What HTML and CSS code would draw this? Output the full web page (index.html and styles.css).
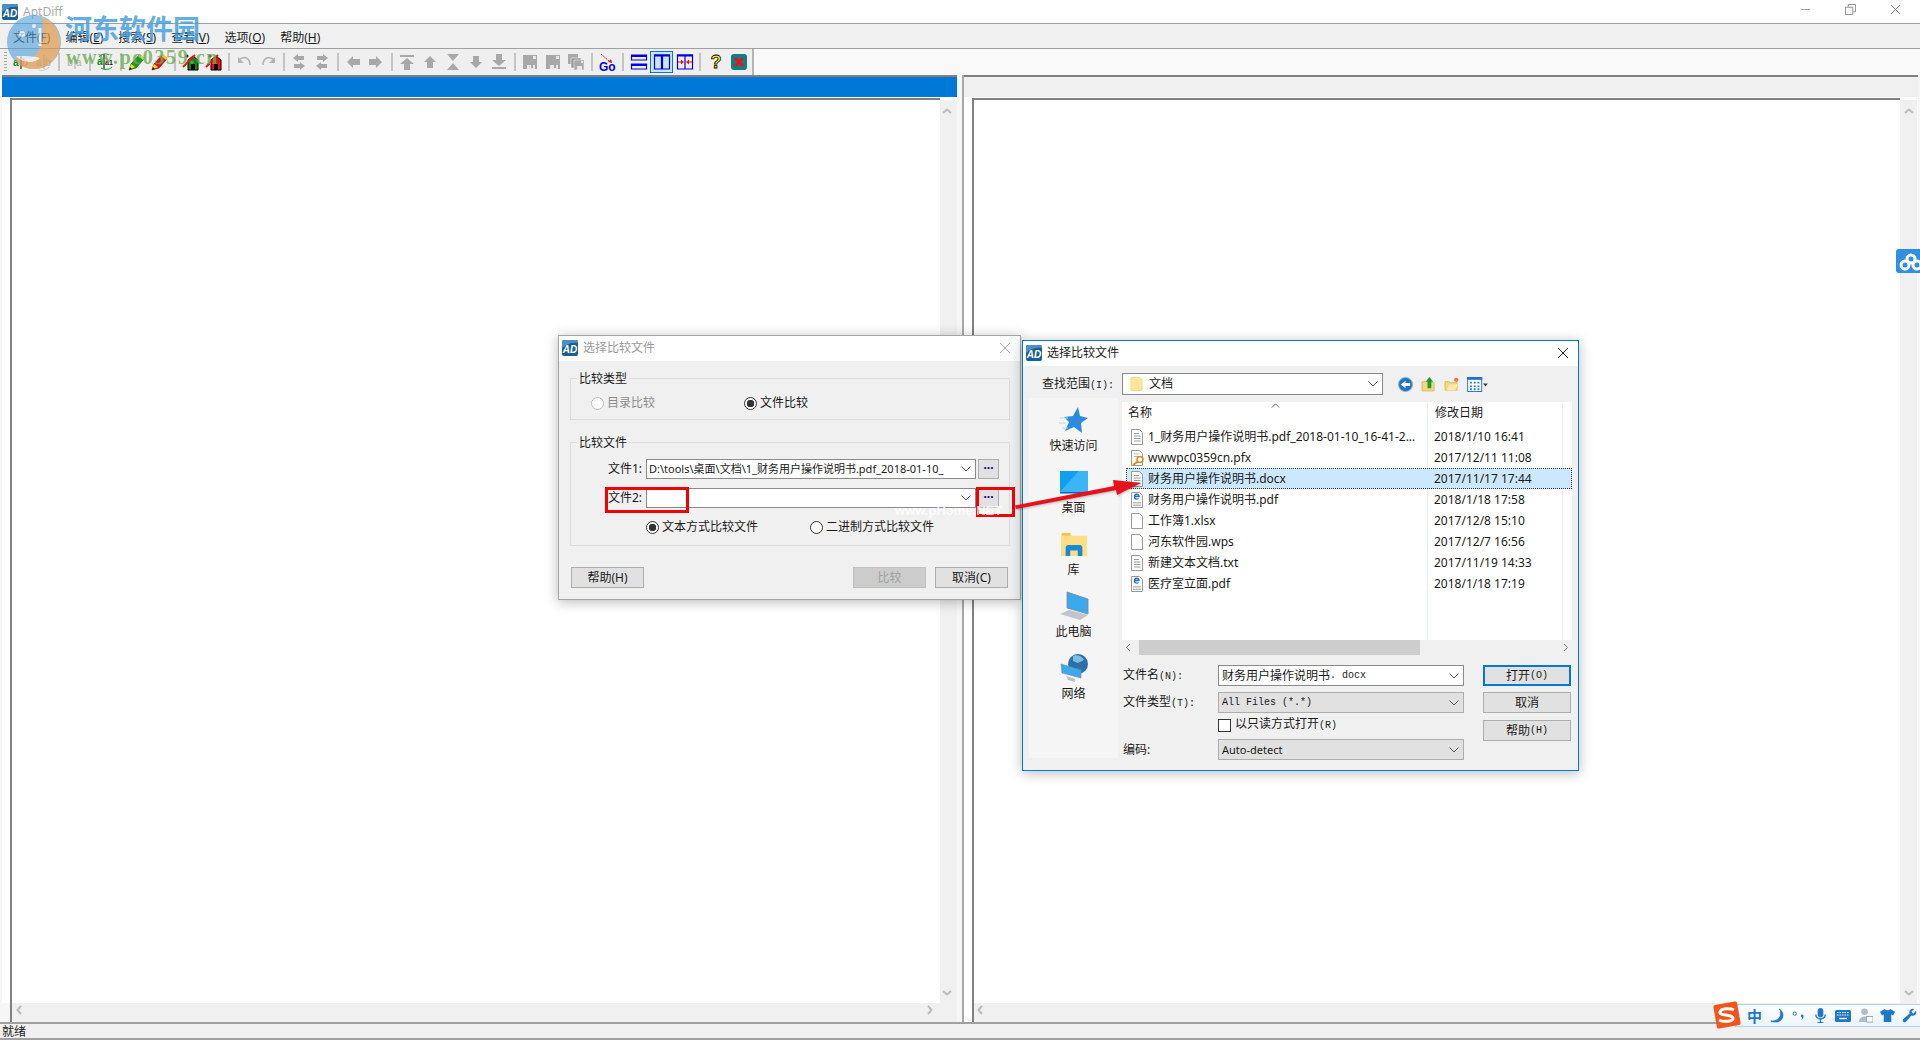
FILE: index.html
```html
<!DOCTYPE html>
<html lang="zh-CN">
<head>
<meta charset="utf-8">
<title>AptDiff</title>
<link rel="stylesheet" href="styles.css">
</head>
<body>
<svg class="defs" width="0" height="0" aria-hidden="true">
  <symbol id="ad" viewBox="0 0 16 16"><rect width="16" height="16" rx="2" fill="#1c5f96"/><path d="M0 8C5 3 11 2 16 3V2a2 2 0 0 0-2-2H2a2 2 0 0 0-2 2z" fill="#4c91c4"/><text x="8" y="12.5" text-anchor="middle" class="adt">AD</text></symbol>
  <symbol id="pen-g" viewBox="0 0 18 18"><path d="M1 17l2-6 8-9 5 4-8 9z" fill="#1f9a1f" stroke="#0b4d0b" stroke-width=".6"/><path d="M1 17l2-6 4 3z" fill="#ffe400"/><path d="M1 17l1-3 2 2z" fill="#000"/><path d="M10 3l5 4 2-2-5-4z" fill="#b6d96a"/></symbol>
  <symbol id="pen-r" viewBox="0 0 18 18"><path d="M1 17l2-6 8-9 5 4-8 9z" fill="#e0141c" stroke="#6d0b0b" stroke-width=".6"/><path d="M1 17l2-6 4 3z" fill="#ffe400"/><path d="M1 17l1-3 2 2z" fill="#000"/><path d="M10 3l5 4 2-2-5-4z" fill="#f0c040"/></symbol>
  <symbol id="house-g" viewBox="0 0 18 18"><path d="M6 7l5-4 5 4v10H6z" fill="#0a8a1a" stroke="#000"/><rect x="9" y="11" width="4" height="6" fill="#000"/><path d="M1 14L13 2" stroke="#f01010" stroke-width="2"/><circle cx="5" cy="3" r="1.6" fill="#222"/></symbol>
  <symbol id="house-r" viewBox="0 0 18 18"><path d="M6 7l5-4 5 4v10H6z" fill="#f01010" stroke="#000"/><rect x="9" y="11" width="4" height="6" fill="#000"/><path d="M1 14L13 2" stroke="#f01010" stroke-width="2"/><circle cx="5" cy="3" r="1.6" fill="#222"/></symbol>
  <symbol id="undo" viewBox="0 0 18 18"><path d="M4 6c5-3 10-1 10 6" fill="none" stroke="#b4b4b4" stroke-width="1.6"/><path d="M2 4v6h6z" fill="#b4b4b4"/></symbol>
  <symbol id="redo" viewBox="0 0 18 18"><path d="M14 6C9 3 4 5 4 12" fill="none" stroke="#b4b4b4" stroke-width="1.6"/><path d="M16 4v6h-6z" fill="#b4b4b4"/></symbol>
  <symbol id="lr-a" viewBox="0 0 18 18"><path d="M3 5l5-4v2h6v4H8v2zM15 13l-5-4v2H4v4h6v2z" fill="#a8a8a8"/></symbol>
  <symbol id="lr-b" viewBox="0 0 18 18"><path d="M15 5l-5-4v2H4v4h6v2zM3 13l5-4v2h6v4H8v2z" fill="#a8a8a8"/></symbol>
  <symbol id="left" viewBox="0 0 18 18"><path d="M3 9l6-6v3h7v6H9v3z" fill="#a8a8a8"/></symbol>
  <symbol id="right" viewBox="0 0 18 18"><path d="M15 9L9 3v3H2v6h7v3z" fill="#a8a8a8"/></symbol>
  <symbol id="top" viewBox="0 0 18 18"><path d="M2 2h14v2H2zM9 5l7 6h-4v6H6v-6H2z" fill="#a8a8a8"/></symbol>
  <symbol id="up" viewBox="0 0 18 18"><path d="M9 3l6 6h-3v6H6V9H3z" fill="#a8a8a8"/></symbol>
  <symbol id="mid" viewBox="0 0 18 18"><path d="M3 1h12l-6 7zM9 10l6 7H3z" fill="#a8a8a8"/></symbol>
  <symbol id="down" viewBox="0 0 18 18"><path d="M9 15l6-6h-3V3H6v6H3z" fill="#a8a8a8"/></symbol>
  <symbol id="bottom" viewBox="0 0 18 18"><path d="M2 14h14v2H2zM9 13l7-6h-4V1H6v6H2z" fill="#a8a8a8"/></symbol>
  <symbol id="save" viewBox="0 0 18 18"><path d="M2 2h14v14H2z" fill="#a8a8a8"/><path d="M12 3h3v3h-3zM6 12h8v4H6z" fill="#e8e8e8"/><path d="M10 12h2v3h-2z" fill="#a8a8a8"/></symbol>
  <symbol id="saves" viewBox="0 0 18 18"><path d="M1 1h10v10H1z" fill="#a8a8a8"/><path d="M4 5h10v10H4z" fill="#999" stroke="#eee" stroke-width=".6"/><path d="M7 7h10v10H7z" fill="#a8a8a8" stroke="#eee" stroke-width=".6"/><path d="M14 8h2v2h-2zM10 13h5v4h-5z" fill="#e8e8e8"/></symbol>
  <symbol id="sp-h" viewBox="0 0 18 18"><path d="M1.500 2h15v5h-15zM1.500 11h15v5h-15z" fill="none" stroke="#0000e0" stroke-width="1.200"/><path d="M1 2h16v2H1zM1 11h16v2H1z" fill="#0000e0"/></symbol>
  <symbol id="sp-v" viewBox="0 0 18 18"><path d="M1.500 2h7v14h-7zM9.500 2h7v14h-7z" fill="none" stroke="#0000e0" stroke-width="1.200"/><path d="M1 1.500h16v2H1z" fill="#0000e0"/></symbol>
  <symbol id="sp-c" viewBox="0 0 18 18"><path d="M1.500 2h15v14h-15zM9 2v14" fill="none" stroke="#0000e0" stroke-width="1.200"/><path d="M1 1.500h16v2H1z" fill="#0000e0"/><path d="M2 9h5M16 9h-5" stroke="#f01010" stroke-width="1.200"/><path d="M8 9L5 6.500v5zM10 9l3-2.500v5z" fill="#f01010"/></symbol>
  <symbol id="stop" viewBox="0 0 18 18"><rect x="1" y="1" width="16" height="16" rx="3" fill="#0f7f86"/><path d="M4 6l2-2 3 3 3-3 2 2-3 3 3 3-2 2-3-3-3 3-2-2 3-3z" fill="#f01010"/></symbol>
  <symbol id="chev" viewBox="0 0 10 6"><path d="M.5 .5L5 5 9.500 .5" fill="none" stroke="#555" stroke-width="1"/></symbol>
  <symbol id="chev-g" viewBox="0 0 10 6"><path d="M1 1l4 3.500L9 1" fill="none" stroke="#bbb" stroke-width="2"/></symbol>
  <symbol id="doc" viewBox="0 0 16 16"><path d="M2.500 .5h8l3 3v12h-11z" fill="#fff" stroke="#9a9a9a"/><path d="M5 4.500h5M5 7h6.500M5 9.500h6.500M5 12h6.500" stroke="#9a9a9a"/></symbol>
  <symbol id="blank" viewBox="0 0 16 16"><path d="M2.500 .5h8l3 3v12h-11z" fill="#fff" stroke="#9a9a9a"/></symbol>
  <symbol id="pdf" viewBox="0 0 16 16"><path d="M2.500 .5h8l3 3v12h-11z" fill="#fff" stroke="#9a9a9a"/><path d="M5.500 4.500h4.500c0-3-4.500-3-4.500 0s2.500 3 4 2" fill="none" stroke="#1a6fc9" stroke-width="1.300"/><path d="M4 10.500h8M4 12h8M4 13.500h8" stroke="#aaa" stroke-width=".8"/></symbol>
  <symbol id="pfx" viewBox="0 0 16 16"><path d="M2.500 .5h8l3 3v12h-11z" fill="#fff" stroke="#9a9a9a"/><path d="M5 4h5M5 6.500h6" stroke="#b5b5b5"/><circle cx="11" cy="9.500" r="3" fill="none" stroke="#d68a1a" stroke-width="1.500"/><path d="M9 11.500L4 15" stroke="#d68a1a" stroke-width="1.800"/></symbol>
</svg>

<div class="app">
  <header class="title"><svg class="title-ico"><use href="#ad"/></svg><span class="title-txt">AptDiff</span>
    <div class="winbtns">
      <svg class="wb" viewBox="0 0 12 12"><path d="M1 6h10" stroke="#999"/></svg>
      <svg class="wb" viewBox="0 0 12 12"><path d="M.5 3.500h8v8h-8zM3.500 3V.5h8v8H9" fill="none" stroke="#888"/></svg>
      <svg class="wb" viewBox="0 0 12 12"><path d="M1 1l10 10M11 1L1 11" stroke="#777"/></svg>
    </div>
  </header>
  <nav class="menu">
    <span>文件(<u>F</u>)</span><span>编辑(<u>E</u>)</span><span>搜索(<u>S</u>)</span><span>查看(<u>V</u>)</span><span>选项(<u>O</u>)</span><span>帮助(<u>H</u>)</span>
  </nav>
  <div class="toolbar-row">
    <div class="toolbar">
      <i class="grip"></i>
      <span class="tb"><svg class="ti" viewBox="0 0 18 18"><text x="1" y="13" class="tt tg">a</text><path d="M9 3v13" stroke="#000"/><text x="10" y="13" class="tt tp">b</text></svg></span>
      <span class="tb"><svg class="ti" viewBox="0 0 18 18"><text x="1" y="13" class="tt tf">a</text><path d="M9 2v14" stroke="#aaa"/><text x="10" y="13" class="tt tf">b</text><path d="M4 17c4 1 8 0 10-3" fill="none" stroke="#ccc"/></svg></span>
      <i class="sep"></i>
      <span class="tb"><svg class="ti" viewBox="0 0 18 18"><text x="1" y="13" class="tt tf">b</text><path d="M9 3v13" stroke="#aaa"/><text x="10" y="13" class="tt tf">a</text></svg></span>
      <i class="sep"></i>
      <span class="tb"><svg class="ti" viewBox="0 0 18 18"><text x="0" y="12" class="tt tg">a</text><path d="M7 1v15" stroke="#000"/><text x="8" y="12" class="tt tk">a1</text><path d="M2 4c2-3 7-4 10-2M15 14c-3 3-8 3-11 1" fill="none" stroke="#0a9a2a"/></svg></span>
      <i class="sep"></i>
      <span class="tb"><svg class="ti"><use href="#pen-g"/></svg></span>
      <span class="tb"><svg class="ti"><use href="#pen-r"/></svg></span>
      <i class="sep"></i>
      <span class="tb"><svg class="ti"><use href="#house-g"/></svg></span>
      <span class="tb"><svg class="ti"><use href="#house-r"/></svg></span>
      <i class="sep"></i>
      <span class="tb"><svg class="ti"><use href="#undo"/></svg></span>
      <span class="tb"><svg class="ti"><use href="#redo"/></svg></span>
      <i class="sep"></i>
      <span class="tb"><svg class="ti"><use href="#lr-a"/></svg></span>
      <span class="tb"><svg class="ti"><use href="#lr-b"/></svg></span>
      <i class="sep"></i>
      <span class="tb"><svg class="ti"><use href="#left"/></svg></span>
      <span class="tb"><svg class="ti"><use href="#right"/></svg></span>
      <i class="sep"></i>
      <span class="tb"><svg class="ti"><use href="#top"/></svg></span>
      <span class="tb"><svg class="ti"><use href="#up"/></svg></span>
      <span class="tb"><svg class="ti"><use href="#mid"/></svg></span>
      <span class="tb"><svg class="ti"><use href="#down"/></svg></span>
      <span class="tb"><svg class="ti"><use href="#bottom"/></svg></span>
      <i class="sep"></i>
      <span class="tb"><svg class="ti"><use href="#save"/></svg></span>
      <span class="tb"><svg class="ti"><use href="#save"/></svg></span>
      <span class="tb"><svg class="ti"><use href="#saves"/></svg></span>
      <i class="sep"></i>
      <span class="tb"><svg class="ti" viewBox="0 0 18 18"><path d="M3 1l9 8" stroke="#f01010" stroke-dasharray="2 1"/><path d="M14 10l-4-1 3-3z" fill="#f01010"/><text x="1" y="17.500" class="tgo">Go</text></svg></span>
      <i class="sep"></i>
      <span class="tb"><svg class="ti"><use href="#sp-h"/></svg></span>
      <span class="tb on"><svg class="ti"><use href="#sp-v"/></svg></span>
      <span class="tb"><svg class="ti"><use href="#sp-c"/></svg></span>
      <i class="sep"></i>
      <span class="tb"><svg class="ti" viewBox="0 0 18 18"><text x="9" y="15" text-anchor="middle" class="tq">?</text></svg></span>
      <span class="tb"><svg class="ti"><use href="#stop"/></svg></span>
    </div>
  </div>
  <main class="panes">
    <section class="pane pane-l">
      <div class="phead blue"></div>
      <div class="pbody">
        <div class="sheet"></div>
        <div class="vsb"><svg class="ar flip"><use href="#chev-g"/></svg><svg class="ar"><use href="#chev-g"/></svg></div>
      </div>
      <div class="hsb"><svg class="ar rl"><use href="#chev-g"/></svg><svg class="ar rr"><use href="#chev-g"/></svg></div>
    </section>
    <section class="pane pane-r">
      <div class="phead"></div>
      <div class="pbody">
        <div class="sheet"></div>
        <div class="vsb"><svg class="ar flip"><use href="#chev-g"/></svg><svg class="ar"><use href="#chev-g"/></svg></div>
      </div>
      <div class="hsb"><svg class="ar rl"><use href="#chev-g"/></svg><svg class="ar rr"><use href="#chev-g"/></svg></div>
    </section>
  </main>
  <footer class="status">就绪</footer>
</div>

<section class="dlg dlg-a">
  <div class="dlg-title"><svg class="dlg-ico"><use href="#ad"/></svg><span class="dim">选择比较文件</span><svg class="dlg-x" viewBox="0 0 10 10"><path d="M0 0l10 10M10 0L0 10" stroke="#aaa"/></svg></div>
  <div class="dlg-a-body">
    <div class="grp grp1">
      <span class="legend">比较类型</span>
      <div class="radios r1">
        <label class="rad dis"><i class="radio"></i>目录比较</label>
        <label class="rad"><i class="radio chk"></i>文件比较</label>
      </div>
    </div>
    <div class="grp grp2">
      <span class="legend">比较文件</span>
      <div class="frow"><span class="flab">文件1:</span><div class="inp">D:\tools\桌面\文档\1_财务用户操作说明书.pdf_2018-01-10_<svg class="cv"><use href="#chev"/></svg></div><span class="dots">···</span></div>
      <div class="frow"><span class="flab">文件2:</span><div class="inp"><svg class="cv"><use href="#chev"/></svg></div><span class="dots">···</span></div>
      <div class="radios r2">
        <label class="rad"><i class="radio chk"></i>文本方式比较文件</label>
        <label class="rad"><i class="radio"></i>二进制方式比较文件</label>
      </div>
    </div>
    <div class="dlg-a-btns">
      <span class="btn">帮助(H)</span><span class="spacer"></span><span class="btn off">比较</span><span class="btn">取消(C)</span>
    </div>
  </div>
</section>

<section class="dlg dlg-b">
  <div class="dlg-title"><svg class="dlg-ico"><use href="#ad"/></svg><span>选择比较文件</span><svg class="dlg-x dk" viewBox="0 0 10 10"><path d="M0 0l10 10M10 0L0 10" stroke="#222"/></svg></div>
  <div class="lookin">
    <span class="lk-lab">查找范围<span class="m">(I):</span></span>
    <div class="lk-combo"><svg class="fold" viewBox="0 0 14 16"><path d="M1 1h9l3 2v12H1z" fill="#ffe79a" stroke="#e6c766" stroke-width=".6"/></svg>文档<svg class="cv"><use href="#chev"/></svg></div>
    <div class="lk-tools">
      <svg class="lt" viewBox="0 0 16 16"><circle cx="8" cy="8" r="7.500" fill="#1e74c8"/><circle cx="8" cy="8" r="7.500" fill="none" stroke="#8fb4d6"/><path d="M3 8l5-4v2.500h5v3H8V12z" fill="#fff"/></svg>
      <svg class="lt" viewBox="0 0 16 16"><path d="M1 5h5l1 1h7v9H1z" fill="#f3d77a" stroke="#caa94a" stroke-width=".6"/><path d="M9 0l4 5h-2v7H7V5H5z" fill="#1c9a2a"/></svg>
      <svg class="lt" viewBox="0 0 16 16"><path d="M1 5h5l1 1h7v8H1z" fill="#f3d77a" stroke="#caa94a" stroke-width=".6"/><path d="M3 14l2-6h10l-3 6z" fill="#fbe9a6"/><circle cx="13" cy="3" r="2.300" fill="#f0782a"/></svg>
      <svg class="lt lv" viewBox="0 0 22 16"><rect x=".5" y=".5" width="15" height="15" fill="#fff" stroke="#1e74c8"/><path d="M0 0h16v3H0z" fill="#1e74c8"/><path d="M3 5h2v2H3zM7 5h2v2H7zM11 5h2v2h-2zM3 9h2v2H3zM7 9h2v2H7zM11 9h2v2h-2zM3 12h2v2H3zM7 12h2v2H7zM11 12h2v2h-2z" fill="#2a7fc9"/><path d="M17 7h5l-2.500 3z" fill="#333"/></svg>
    </div>
  </div>
  <div class="mid">
    <aside class="side">
      <div class="sitem"><svg class="si" viewBox="0 0 30 30"><path d="M19 2l2 9 8 2-7 5 1 10-8-6-9 4 4-9-5-5 9-1z" fill="#2c8be0"/><path d="M1 13h8M0 18h7M3 23h6" stroke="#bcd9f2"/></svg><span>快速访问</span></div>
      <div class="sitem"><svg class="si" viewBox="0 0 30 24"><rect x="1" y="1" width="28" height="21" fill="#10a0f0"/><path d="M1 22L20 1h9v21z" fill="#3cb4f8"/><path d="M1 22h28v1.500H1z" fill="#0a66b8"/></svg><span>桌面</span></div>
      <div class="sitem"><svg class="si" viewBox="0 0 30 28"><path d="M1 3h10l2 2h16v22H1z" fill="#ffdf85"/><path d="M2 2h9v3H2z" fill="#f4c24f"/><path d="M6 27v-9c0-2 1-3 3-3h12c2 0 3 1 3 3v9h-5v-6h-8v6z" fill="#1e88d8"/></svg><span>库</span></div>
      <div class="sitem"><svg class="si" viewBox="0 0 30 30"><path d="M8 1l21 7v15L8 17z" fill="#3ca9ec" stroke="#7a8a98" stroke-width=".8"/><path d="M1 23l9-4 19 5-8 5z" fill="#bfc5cb"/></svg><span>此电脑</span></div>
      <div class="sitem"><svg class="si" viewBox="0 0 30 30"><circle cx="19" cy="11" r="10" fill="#2d6fa8"/><path d="M14 3c4-2 9 0 11 4l-6 3-5-2z" fill="#7cc0e0"/><path d="M2 11l20 6v8L3 20z" fill="#3ca9ec" stroke="#6d8da8" stroke-width=".6"/><path d="M7 23l9 3v3l-7-2z" fill="#b8bec4"/></svg><span>网络</span></div>
    </aside>
    <div class="listwrap">
      <div class="list">
        <div class="lrow lhead"><span class="c1">名称</span><span class="c2">修改日期</span><span class="c3">类型</span><svg class="sort flip"><use href="#chev"/></svg></div>
        <div class="lrow"><svg class="fi"><use href="#doc"/></svg><span class="c1">1_财务用户操作说明书.pdf_2018-01-10_16-41-2...</span><span class="c2">2018/1/10 16:41</span><span class="c3">Chrome</span></div>
        <div class="lrow"><svg class="fi"><use href="#pfx"/></svg><span class="c1">wwwpc0359cn.pfx</span><span class="c2">2017/12/11 11:08</span><span class="c3">Per</span></div>
        <div class="lrow sel"><svg class="fi"><use href="#doc"/></svg><span class="c1">财务用户操作说明书.docx</span><span class="c2">2017/11/17 17:44</span><span class="c3">Chrome</span></div>
        <div class="lrow"><svg class="fi"><use href="#pdf"/></svg><span class="c1">财务用户操作说明书.pdf</span><span class="c2">2018/1/18 17:58</span><span class="c3">PDF</span></div>
        <div class="lrow"><svg class="fi"><use href="#blank"/></svg><span class="c1">工作簿1.xlsx</span><span class="c2">2017/12/8 15:10</span><span class="c3">XLS</span></div>
        <div class="lrow"><svg class="fi"><use href="#blank"/></svg><span class="c1">河东软件园.wps</span><span class="c2">2017/12/7 16:56</span><span class="c3">WPS</span></div>
        <div class="lrow"><svg class="fi"><use href="#doc"/></svg><span class="c1">新建文本文档.txt</span><span class="c2">2017/11/19 14:33</span><span class="c3">文本</span></div>
        <div class="lrow"><svg class="fi"><use href="#pdf"/></svg><span class="c1">医疗室立面.pdf</span><span class="c2">2018/1/18 17:19</span><span class="c3">PDF</span></div>
      </div>
      <div class="lsb"><svg class="lar rl"><use href="#chev"/></svg><i class="thumb"></i><svg class="lar rr"><use href="#chev"/></svg></div>
      <div class="form">
        <div class="fcol">
          <div class="fr"><span class="fl">文件名<span class="m">(N):</span></span><div class="cb wh">财务用户操作说明书<span class="m">. docx</span><svg class="cv"><use href="#chev"/></svg></div></div>
          <div class="fr"><span class="fl">文件类型<span class="m">(T):</span></span><div class="cb"><span class="m">All Files (*.*)</span><svg class="cv"><use href="#chev"/></svg></div></div>
          <div class="fr ck"><span class="fl"></span><i class="check"></i><span>以只读方式打开<span class="m">(R)</span></span></div>
          <div class="fr"><span class="fl">编码:</span><div class="cb">Auto-detect<svg class="cv"><use href="#chev"/></svg></div></div>
        </div>
        <div class="bcol">
          <span class="btn def">打开<span class="m">(O)</span></span>
          <span class="btn">取消</span>
          <span class="btn">帮助<span class="m">(H)</span></span>
        </div>
      </div>
    </div>
  </div>
</section>

<div class="redbox rb1"></div>
<div class="redbox rb2"></div>
<span class="wm-net">www.pHome.NET</span>
<svg class="arrow" viewBox="0 0 140 40"><path d="M0 31.500L99 12 98 6 126 9 102 21 101 16 1 35z" fill="#e8101a"/></svg>

<div class="wm" aria-hidden="true">
  <svg class="wm-logo" viewBox="0 0 56 60"><circle cx="28" cy="30" r="27" fill="#4b9ed8" opacity=".8"/><path d="M36 5a27 27 0 0 1-4 52C14 58 8 50 10 44c8 8 32 6 26-39z" fill="#f29a3c" opacity=".85"/><path d="M10 44c6 7 18 8 24 2-6-2-18-2-24-2z" fill="#fff" opacity=".8"/><circle cx="16" cy="22" r="3" fill="#fff" opacity=".8"/><circle cx="28" cy="14" r="2" fill="#fff" opacity=".8"/><path d="M34 16v18" stroke="#fff" stroke-width="3" opacity=".8"/></svg>
  <span class="wm-cn">河东软件园</span>
  <span class="wm-url">www.pc0359.cn</span>
</div>

<a class="cloud" aria-label="cloud"><svg viewBox="0 0 24 18"><g fill="none" stroke="#fff" stroke-width="3"><circle cx="12" cy="6" r="4"/><circle cx="6" cy="12" r="4"/><circle cx="18" cy="12" r="4"/></g></svg></a>

<div class="ime">
  <svg class="ime-s" viewBox="0 0 28 28"><rect x="2" y="2" width="24" height="24" rx="2" fill="#f2541b" transform="rotate(-10 14 14)"/><path d="M21 9c-4-2-13-2-14 2s12 2 13 6-10 4-14 2" fill="none" stroke="#fff" stroke-width="3"/></svg>
  <div class="ime-bar">
    <span class="ime-zh">中</span>
    <svg class="ii" viewBox="0 0 16 16"><path d="M11 1c3 3 3 13-9 13 4 1 9 2 12-3 2-4 0-8-3-10z" fill="#1e78c8" stroke="#1e78c8"/></svg>
    <svg class="ii" viewBox="0 0 16 16"><circle cx="4" cy="6" r="1.800" fill="none" stroke="#1e78c8"/><path d="M12 7c2 0 2 4-1 6 1-2 1-3 0-3.500C10 8 11 7 12 7z" fill="#1e78c8"/></svg>
    <svg class="ii" viewBox="0 0 16 16"><rect x="5" y="0" width="6" height="10" rx="3" fill="#1e78c8"/><path d="M3 7c0 6 10 6 10 0M8 12v3M5 15.500h6" fill="none" stroke="#1e78c8" stroke-width="1.400"/></svg>
    <svg class="ii wd" viewBox="0 0 16 12"><rect width="16" height="12" rx="1.500" fill="#1e78c8"/><path d="M2 2.500h12M2 5h12" stroke="#fff" stroke-dasharray="1.500 1"/><path d="M4 8.500h8" stroke="#fff" stroke-width="1.400"/></svg>
    <svg class="ii" viewBox="0 0 16 16"><circle cx="7" cy="4" r="3.500" fill="#b0bcc8"/><path d="M1 15c0-8 12-8 12 0z" fill="#b0bcc8"/><rect x="9" y="9" width="7" height="6" fill="#fff" stroke="#9aa8b4"/></svg>
    <svg class="ii" viewBox="0 0 16 16"><path d="M5 1L0 4l2 4 2-1v8h8V7l2 1 2-4-5-3c-1 2-5 2-6 0z" fill="#1e78c8"/></svg>
    <svg class="ii" viewBox="0 0 16 16"><path d="M15 3l-3 3-2-2 3-3c-3-1-6 1-5 5L1 12c-1 2 1 4 3 3l6-7c4 1 6-2 5-5z" fill="#1e78c8"/></svg>
  </div>
</div>
</body>
</html>
```

FILE: styles.css
```css
* { box-sizing: border-box; }
html, body { margin: 0; padding: 0; }
body {
  width: 1920px; height: 1040px; overflow: hidden; position: relative;
  background: #f0f0f0; color: #1a1a1a;
  font: 12px/16px "Noto Sans", "Noto Sans CJK SC", sans-serif;
}
svg { display: block; }
.defs { position: absolute; }
.m { font-family: "Liberation Mono", "Noto Sans CJK SC", monospace; font-size: 10px; }
.adt { font: italic bold 10px "Liberation Sans", sans-serif; fill: #fff; }

.app { display: flex; flex-direction: column; height: 1040px; }
.title { height: 24px; background: #fff; border-bottom: 1px solid #a0a0a0; display: flex; align-items: center; padding-left: 2px; flex: none; }
.title-ico { width: 16px; height: 16px; margin-right: 5px; }
.title-txt { color: #aaa; font-size: 12px; }
.winbtns { margin-left: auto; display: flex; gap: 34px; padding-right: 19px; margin-top: -4px; }
.wb { width: 11px; height: 11px; }
.menu { height: 25px; flex: none; display: flex; border-bottom: 1px solid #a0a0a0; padding: 6px 0 0 13px; gap: 15px; background: #f0f0f0; }
.toolbar-row { height: 26px; flex: none; background: #f9f9f9; }
.toolbar { width: 754px; height: 26px; background: #efefef; border-right: 2px solid #b4b4b4; display: flex; align-items: center; padding-left: 9px; position: relative; }
.grip { position: absolute; left: 4px; top: 3px; width: 3px; height: 21px; background: repeating-linear-gradient(#aaa 0 1px, transparent 1px 3px); }
.tb { width: 23px; height: 22px; flex: none; display: flex; align-items: center; justify-content: center; }
.tb.on { background: #cce4f7; border: 1px solid #0078d7; }
.sep { width: 8.1px; height: 18px; flex: none; background: linear-gradient(#c4c4c4, #c4c4c4) center / 2px 100% no-repeat; }
.ti { width: 18px; height: 18px; overflow: visible; }
.tt { font: bold 10px "Liberation Sans", sans-serif; }
.tg { fill: #0a8a1a; } .tp { fill: #f08a96; } .tf { fill: #c0c0c0; } .tk { fill: #222; font-size: 7px; }
.tgo { font: bold 12px "Liberation Sans", sans-serif; fill: #0000d8; }
.tq { font: bold 18px "Liberation Sans", sans-serif; fill: #ffef20; stroke: #000; stroke-width: .8; }

.panes { flex: 1; display: flex; min-height: 0; background: #f6f6f6; }
.pane { display: flex; flex-direction: column; }
.pane-l { width: 957px; }
.pane-r { width: 956px; margin-left: 5px; border-left: 2px solid #a8a8a8; background: #fff; }
.phead { height: 23px; flex: none; background: #f0f0f0; border-top: 2px solid #808080; border-bottom: 1px solid #fff; }
.phead.blue { background: #0078d7; }
.pane-l .phead { margin-left: 2px; }
.pbody { flex: 1; display: flex; min-height: 0; background: #fff; padding-left: 8px; }
.pane-l .pbody { margin-left: 2px; }
.pane-r .pbody { padding-right: 1px; }
.sheet { flex: 1; background: #fff; border-left: 2px solid #808080; border-top: 2px solid #808080; }
.vsb { width: 17px; flex: none; background: #f0f0f0; display: flex; flex-direction: column; justify-content: space-between; align-items: center; padding: 8px 0 7px; border-top: 2px solid #fff; }
.pane-l .vsb { padding-right: 3px; }
.ar { width: 10px; height: 6px; }
.flip { transform: scaleY(-1); }
.hsb { height: 19px; flex: none; background: #f0f0f0; margin-left: 8px; display: flex; justify-content: space-between; align-items: flex-start; padding: 4px 22px 0 2px; border-left: 2px solid #808080; }
.pane-l .hsb { margin-left: 10px; }
.pane-r .hsb { padding-right: 18px; padding-left: 1px; }
.rl { transform: rotate(90deg); }
.rr { transform: rotate(-90deg); }
.status { height: 18px; flex: none; border-top: 2px solid #a0a0a0; border-bottom: 2px solid #a0a0a0; padding-left: 2px; line-height: 15px; background: #f0f0f0; }

.dlg { position: absolute; background: #f0f0f0; box-shadow: 0 2px 12px rgba(0,0,0,.28); display: flex; flex-direction: column; }
.dlg-a { left: 558px; top: 335px; width: 463px; height: 265px; border: 1px solid #a5a5a5; }
.dlg-b { left: 1022px; top: 340px; width: 557px; height: 431px; border: 1px solid #0078d7; }
.dlg-title { height: 25px; flex: none; background: #fff; display: flex; align-items: center; padding: 0 0 2px 3px; gap: 5px; }
.dlg-ico { width: 16px; height: 16px; flex: none; }
.dim { color: #999; }
.dlg-x { width: 10px; height: 10px; margin-left: auto; margin-right: 10px; }

.dlg-a-body { padding: 17px 10px 0 11px; display: flex; flex-direction: column; flex: 1; }
.grp { border: 1px solid #dcdcdc; position: relative; flex: none; }
.legend { position: absolute; left: 6px; top: -8px; padding: 0 2px; background: #f0f0f0; line-height: 16px; }
.grp1 { height: 42px; }
.grp2 { height: 104px; margin-top: 22px; }
.radios { display: flex; white-space: nowrap; }
.rad { display: flex; align-items: center; gap: 3px; height: 16px; }
.radio { width: 13px; height: 13px; border: 1px solid #333; border-radius: 50%; background: #fff; flex: none; }
.radio.chk { background: radial-gradient(circle, #333 0 3.500px, #fff 4px); }
.dis { color: #8c8c8c; } .dis .radio { border-color: #bbb; }
.r1 { padding: 16px 0 0 20px; }
.r1 .rad:first-child { width: 153px; }
.r2 { padding: 11px 0 0 75px; }
.r2 .rad:first-child { width: 164px; }
.frow { display: flex; align-items: center; height: 20px; margin-top: 9px; padding-left: 37px; }
.legend + .frow { margin-top: 16px; }
.flab { width: 38px; flex: none; }
.inp { width: 330px; height: 20px; background: #fff; border: 1px solid #8a8a8a; padding-left: 2px; display: flex; align-items: center; position: relative; font-size: 11px; white-space: nowrap; overflow: hidden; }
.cv { width: 10px; height: 6px; position: absolute; right: 4px; top: 50%; margin-top: -3px; }
.dots { width: 21px; height: 20px; margin-left: 2px; background: #e1e1e1; border: 1px solid #adadad; color: #000080; font-weight: bold; text-align: center; line-height: 16px; }
.dlg-a-btns { display: flex; margin-top: 21px; gap: 9px; padding-left: 1px; }
.spacer { flex: 1; }
.btn { width: 73px; height: 21px; background: #e1e1e1; border: 1px solid #adadad; display: flex; justify-content: center; align-items: center; }
.btn.off { background: #ccc; border-color: #bfbfbf; color: #a0a0a0; }
.dlg-a-btns .btn:last-child { margin-right: 2px; }

.lookin { height: 31px; flex: none; display: flex; align-items: center; padding: 5px 0 0 19px; }
.lk-lab { width: 80px; flex: none; padding-top: 1px; }
.lk-combo { width: 261px; height: 22px; background: #fff; border: 1px solid #8a8a8a; display: flex; align-items: center; padding-left: 7px; gap: 6px; position: relative; }
.fold { width: 13px; height: 16px; }
.lk-tools { display: flex; align-items: center; gap: 8px; margin-left: 15px; }
.lt { width: 15px; height: 15px; }
.lv { width: 21px; height: 15px; }
.mid { flex: 1; display: flex; padding: 0 6px 0 6px; min-height: 0; }
.side { width: 89px; height: 360px; flex: none; margin-top: 1px; background: #f5f5f5; padding-top: 2px; display: flex; flex-direction: column; align-items: center; }
.sitem { height: 62px; flex: none; display: flex; flex-direction: column; align-items: center; width: 100%; padding-top: 2px; }
.si { width: 30px; height: 30px; margin: 3px 0 3px; }
.sitem:nth-child(2) .si, .sitem:nth-child(3) .si { height: 26px; margin: 5px 0; }
.listwrap { margin-left: 4px; width: 450px; flex: none; display: flex; flex-direction: column; padding-top: 5px; }
.list { height: 238px; flex: none; background-color: #fff; background-image: linear-gradient(#e8eef6, #e8eef6), linear-gradient(#e8eef6, #e8eef6); background-size: 1px 100%; background-position: 305px 0, 440px 0; background-repeat: no-repeat; overflow: hidden; }
.lrow { height: 21px; display: flex; align-items: center; position: relative; padding-left: 5px; white-space: nowrap; }
.lhead { height: 24px; padding-left: 6px; padding-bottom: 2px; }
.lhead .c1 { margin-left: 0; width: 306px; }
.fi { width: 16px; height: 16px; position: absolute; left: 7px; top: 3px; }
.c1 { margin-left: 21px; width: 285px; flex: none; overflow: hidden; }
.c2 { width: 141px; flex: none; padding-left: 1px; }
.c3 { width: 3px; flex: none; overflow: hidden; }
.sel { background: #cce8ff; outline: 1px dotted #333; outline-offset: -1px; margin-left: 4px; padding-left: 1px; }
.sel .fi { left: 3px; }
.sort { width: 9px; height: 5px; position: absolute; left: 149px; top: 1px; }
.lsb { height: 15px; flex: none; background: #f0f0f0; display: flex; align-items: center; justify-content: space-between; padding: 0 2px; position: relative; }
.thumb { position: absolute; left: 17px; top: 0; width: 281px; height: 15px; background: #cdcdcd; }
.lar { width: 8px; height: 5px; }
.form { display: flex; padding-top: 10px; }
.fcol { width: 343px; flex: none; display: flex; flex-direction: column; margin-left: 1px; }
.fr { display: flex; align-items: center; height: 21px; margin-bottom: 6px; }
.fr.ck { margin-bottom: 7px; height: 14px; margin-top: -1px; }
.fl { width: 95px; flex: none; }
.cb { width: 246px; height: 21px; background: #e1e1e1; border: 1px solid #adadad; padding-left: 3px; display: flex; align-items: center; position: relative; font-size: 11px; }
.cb.wh { background: #fff; border-color: #8a8a8a; font-size: 12px; }
.check { width: 13px; height: 13px; border: 1px solid #333; background: #fff; margin-right: 4px; flex: none; }
.bcol { display: flex; flex-direction: column; gap: 6px; margin-left: 17px; }
.bcol .btn { width: 88px; }
.bcol .btn:nth-child(3) { margin-top: 1px; }
.btn.def { border: 2px solid #0078d7; }

.redbox { position: absolute; border: 3px solid #f00000; }
.rb1 { left: 605px; top: 487px; width: 84px; height: 26px; }
.rb2 { left: 976px; top: 487px; width: 39px; height: 30px; }
.wm-net { position: absolute; left: 895px; top: 503px; color: rgba(255,255,255,.8); font: bold 13px "Liberation Sans", sans-serif; }
.arrow { position: absolute; left: 1015px; top: 474px; width: 140px; height: 40px; filter: drop-shadow(1px 1px 1px rgba(0,0,0,.25)); }

.wm { position: absolute; left: 6px; top: 12px; width: 210px; height: 62px; pointer-events: none; }
.wm-logo { position: absolute; left: 0; top: 0; width: 56px; height: 60px; opacity: .75; }
.wm-cn { position: absolute; left: 59px; top: -2px; font: bold 27px/36px "Noto Sans CJK SC", sans-serif; color: rgba(70,160,225,.85); white-space: nowrap; }
.wm-url { position: absolute; left: 60px; top: 34px; font: bold 20px/22px "Liberation Serif", serif; letter-spacing: 1.6px; color: rgba(110,170,80,.8); white-space: nowrap; }

.cloud { position: absolute; left: 1896px; top: 249px; width: 24px; height: 24px; background: #2f8fe0; border-radius: 3px 0 0 3px; padding: 4px 0 0 3px; overflow: hidden; }
.cloud svg { width: 24px; height: 18px; }

.ime { position: absolute; left: 1713px; top: 1001px; width: 207px; height: 28px; display: flex; align-items: center; }
.ime-bar { position: absolute; left: 22px; top: 3px; right: 0; height: 23px; background: linear-gradient(#fff, #eaf3fb); border: 1px solid #b7cfe4; border-right: 0; display: flex; align-items: center; padding-left: 11px; gap: 7px; }
.ime-s { width: 28px; height: 28px; position: relative; z-index: 1; }
.ime-zh { font: bold 15px/16px "Noto Sans CJK SC", sans-serif; color: #1e78c8; width: 15px; }
.ii { width: 15px; height: 15px; flex: none; }
.ii.wd { width: 16px; height: 12px; }
```
